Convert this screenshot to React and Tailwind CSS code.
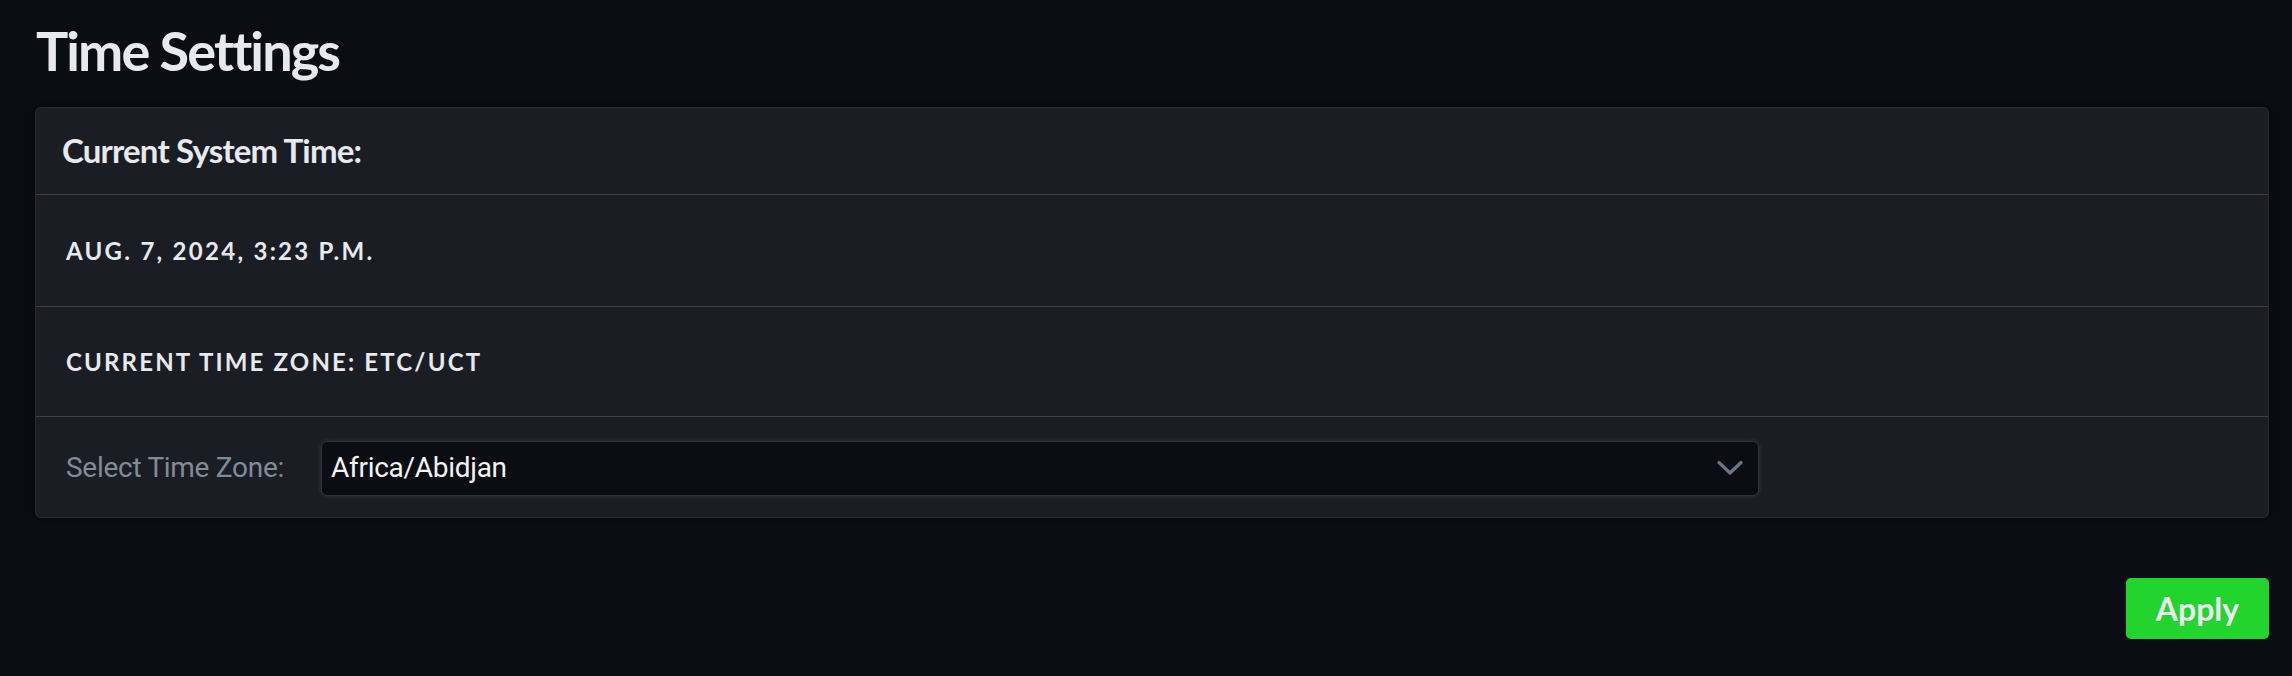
import React, { useState } from 'react';

const zones = ['Africa/Abidjan', 'Africa/Accra', 'Africa/Addis_Ababa', 'Etc/UCT', 'Europe/London'];

const Chevron = () => (
  <svg width="26" height="16" viewBox="0 0 26 16" fill="none" className="pointer-events-none absolute right-[16px] top-1/2 -translate-y-1/2">
    <path d="M2 2.5 L13 13 L24 2.5" stroke="#6b7583" strokeWidth="3.2" strokeLinecap="round" strokeLinejoin="round" />
  </svg>
);

export default function App() {
  const [zone, setZone] = useState('Africa/Abidjan');

  return (
    <div className="min-h-[676px] w-full bg-[#0a0d13] pl-[35px] pr-[23px] pt-[18px] font-['Lato',sans-serif] text-[#e8e9ee]">
      <h1 className="ml-[1px] text-[54px] font-bold leading-[65px] tracking-[-0.035em]">Time Settings</h1>

      <div className="mt-[24px] rounded-[6px] border border-[#2a2d33] bg-[#1a1d24] shadow-[0_0_8px_rgba(0,0,0,0.6)]">
        <div className="flex h-[87px] items-center border-b border-[#3e4045] pl-[26px]">
          <h2 className="text-[33px] font-bold tracking-[-0.025em]">Current System Time:</h2>
        </div>

        <div className="flex h-[112px] items-center border-b border-[#3e4045] pl-[30px]">
          <p className="text-[24px] font-bold uppercase tracking-[0.095em]">Aug. 7, 2024, 3:23 p.m.</p>
        </div>

        <div className="flex h-[110px] items-center border-b border-[#3e4045] pl-[30px]">
          <p className="text-[24px] font-bold uppercase tracking-[0.09em]">Current time zone: Etc/UCT</p>
        </div>

        <div className="flex h-[100px] items-center gap-[37px] pl-[30px] pt-[2px] font-['Roboto',sans-serif]">
          <label htmlFor="tz" className="text-[28px] leading-none tracking-[-0.01em] text-[#808c98]">Select Time Zone:</label>
          <div className="relative w-[1438px]">
            <select
              id="tz"
              value={zone}
              onChange={(e) => setZone(e.target.value)}
              className="h-[55px] w-full appearance-none rounded-[6px] border border-[#2f3238] bg-[#0b0d12] pl-[9px] text-[28px] tracking-[-0.01em] text-[#f2f3f5] shadow-[0_0_5px_rgba(255,255,255,0.12)] outline-none"
            >
              {zones.map((z) => (
                <option key={z} value={z}>{z}</option>
              ))}
            </select>
            <Chevron />
          </div>
        </div>
      </div>

      <div className="mt-[60px] flex justify-end">
        <button className="h-[61px] w-[143px] rounded-[5px] bg-[#22d42d] text-[32px] font-bold text-[#e9ecef]">Apply</button>
      </div>
    </div>
  );
}
